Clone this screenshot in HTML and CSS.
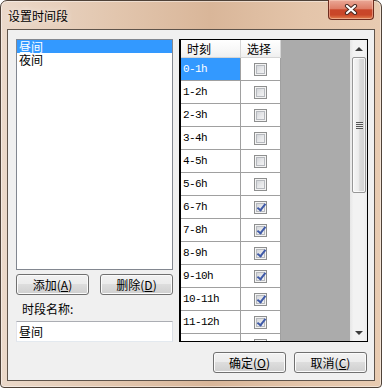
FILE: index.html
```html
<!DOCTYPE html>
<html lang="zh-CN">
<head>
    <meta charset="UTF-8">
    <title>设置时间段</title>
    <link rel="stylesheet" href="styles.css">
</head>
<body>

<div class="window">
    <div class="titlebar">
        <span class="title">设置时间段</span>
        <span class="close">
            <svg width="14" height="11" viewBox="0 0 14 11">
                <path d="M3 2 L11 9 M11 2 L3 9" stroke="#4a2a22" stroke-width="4.2" stroke-linecap="round"/>
                <path d="M3 2 L11 9 M11 2 L3 9" stroke="#fff" stroke-width="2.2" stroke-linecap="round"/>
            </svg>
        </span>
    </div>

    <div class="client">
        <div class="main">
            <div class="left">
                <div class="listbox">
                    <div class="item sel">昼间</div>
                    <div class="item">夜间</div>
                </div>
                <div class="btnrow">
                    <button class="btn">添加(<u>A</u>)</button>
                    <button class="btn">删除(<u>D</u>)</button>
                </div>
                <div class="label">时段名称:</div>
                <input class="field" type="text" value="昼间">
            </div>

            <div class="grid">
                <div class="sheet">
                    <div class="hrow"><div class="hc c1">时刻</div><div class="hc c2">选择</div></div>
                    <div class="row"><div class="c1 sel">0-1h</div><div class="c2"><span class="chk"></span></div></div>
                    <div class="row"><div class="c1">1-2h</div><div class="c2"><span class="chk"></span></div></div>
                    <div class="row"><div class="c1">2-3h</div><div class="c2"><span class="chk"></span></div></div>
                    <div class="row"><div class="c1">3-4h</div><div class="c2"><span class="chk"></span></div></div>
                    <div class="row"><div class="c1">4-5h</div><div class="c2"><span class="chk"></span></div></div>
                    <div class="row"><div class="c1">5-6h</div><div class="c2"><span class="chk"></span></div></div>
                    <div class="row"><div class="c1">6-7h</div><div class="c2"><span class="chk on"></span></div></div>
                    <div class="row"><div class="c1">7-8h</div><div class="c2"><span class="chk on"></span></div></div>
                    <div class="row"><div class="c1">8-9h</div><div class="c2"><span class="chk on"></span></div></div>
                    <div class="row"><div class="c1">9-10h</div><div class="c2"><span class="chk on"></span></div></div>
                    <div class="row"><div class="c1">10-11h</div><div class="c2"><span class="chk on"></span></div></div>
                    <div class="row"><div class="c1">11-12h</div><div class="c2"><span class="chk on"></span></div></div>
                    <!-- wiersz przycięty przez dolną krawędź -->
                    <div class="row"><div class="c1"></div><div class="c2"><span class="chk on"></span></div></div>
                </div>
                <div class="vscroll">
                    <div class="sb-btn up"></div>
                    <div class="sb-thumb"><span class="grip"></span></div>
                    <div class="sb-track"></div>
                    <div class="sb-btn down"></div>
                </div>
            </div>
        </div>

        <div class="footer">
            <button class="btn">确定(<u>O</u>)</button>
            <button class="btn">取消(<u>C</u>)</button>
        </div>
    </div>
</div>

</body>
</html>
```

FILE: styles.css
```css
body {
    margin: 0;
    background-color: #fff;
    font-family: "Noto Sans CJK SC", sans-serif;
    font-size: 12px;
    color: #000;
}

/* okno */
.window {
    box-sizing: border-box;
    width: 382px;
    height: 388px;
    padding: 0 6px 6px;
    border: 1px solid #4f4238;
    border-radius: 7px 7px 4px 4px;
    background: linear-gradient(to right, #ebd9ca 0%, #e2c6ae 30%, #d9b699 55%, #e4c5aa 80%, #e8cbb1 100%);
    box-shadow: inset 0 0 0 1px rgba(255, 255, 255, 0.45);
    display: flex;
    flex-direction: column;
}
.titlebar {
    height: 28px;
    flex-shrink: 0;
    display: flex;
    justify-content: space-between;
    align-items: flex-start;
    padding-left: 1px;
}
.title {
    padding-top: 8px;
    line-height: 14px;
    font-size: 12px;
    text-shadow: 0 0 6px rgba(255, 255, 255, 0.8);
}
.close {
    width: 46px;
    height: 20px;
    box-sizing: border-box;
    margin-top: -1px;
    margin-right: 1px;
    border: 1px solid #6e2c1e;
    border-top: none;
    border-radius: 0 0 4px 4px;
    background: linear-gradient(#eaa897 0%, #de7e67 45%, #c9462a 52%, #c94628 78%, #e2804f 100%);
    box-shadow: inset 0 0 0 1px rgba(255, 220, 200, 0.45);
    display: flex;
    align-items: center;
    justify-content: center;
}

/* obszar klienta */
.client {
    flex: 1;
    border: 1px solid #5f544b;
    background-color: #f0f0f0;
    padding: 9px 6px 7px 8px;
    display: flex;
    flex-direction: column;
}
.main {
    height: 303px;
    display: flex;
    gap: 6px;
}
.left {
    width: 157px;
    display: flex;
    flex-direction: column;
}
.listbox {
    height: 231px;
    box-sizing: border-box;
    border: 1px solid #828790;
    background-color: #fff;
}
.item {
    height: 13px;
    line-height: 13px;
    padding-left: 2px;
}
.item.sel {
    background-color: #3399ff;
    color: #fff;
}
.btnrow {
    display: flex;
    gap: 11px;
    margin-top: 4px;
}
.btn {
    width: 73px;
    height: 21px;
    box-sizing: border-box;
    padding: 0;
    border: 1px solid #707070;
    border-radius: 3px;
    background: linear-gradient(#f2f2f2 0%, #ebebeb 50%, #dddddd 50%, #cfcfcf 100%);
    box-shadow: inset 0 0 0 1px #fbfbfb;
    font-family: inherit;
    font-size: 12px;
    line-height: 19px;
    color: #000;
}
.btn u {
    text-underline-offset: 1px;
}
.label {
    margin-top: 8px;
    padding-left: 6px;
    line-height: 12px;
}
.field {
    margin: 6px 0 0;
    height: 21px;
    box-sizing: border-box;
    padding: 0 2px;
    border: 1px solid;
    border-color: #abadb3 #dbdfe6 #e3e9ef #e2e3ea;
    background-color: #fff;
    font-family: inherit;
    font-size: 12px;
    color: #000;
    outline: none;
}

/* tabela */
.grid {
    width: 189px;
    box-sizing: border-box;
    border: 1px solid #000;
    border-left-width: 2px;
    display: flex;
}
.sheet {
    flex: 1;
    overflow: hidden;
    background-color: #ababab;
}
.hrow, .row {
    display: flex;
}
.c1, .c2 {
    box-sizing: border-box;
    border-right: 1px solid #a0a0a0;
    border-bottom: 1px solid #a0a0a0;
    background-color: #fff;
    display: flex;
    align-items: center;
}
.c1 {
    width: 60px;
}
.c2 {
    width: 40px;
    justify-content: center;
}
.hc {
    height: 18px;
    padding-left: 6px;
    border-color: #d5d5d5;
    background: linear-gradient(#ffffff 0%, #f7f7f7 60%, #efefef 100%);
    justify-content: flex-start;
}
.row .c1, .row .c2 {
    height: 23px;
}
.row .c1 {
    padding-left: 2px;
    font-family: "Liberation Mono", monospace;
    font-size: 11px;
    letter-spacing: -0.6px;
}
.c1.sel {
    background-color: #3399ff;
    color: #fff;
}
.chk {
    position: relative;
    width: 13px;
    height: 13px;
    box-sizing: border-box;
    border: 1px solid #8e8f8f;
    background: linear-gradient(135deg, #c9ccd1 0%, #e6e7e9 50%, #f8f8f8 100%);
    box-shadow: inset 0 0 0 1px #f3f3f3, inset 0 0 0 2px #b6b9be;
}
.chk.on::after {
    content: "";
    position: absolute;
    left: 4px;
    top: 0px;
    width: 3px;
    height: 7px;
    border: solid #3f5aa8;
    border-width: 0 2px 2px 0;
    transform: rotate(38deg);
}

/* pasek przewijania */
.vscroll {
    width: 17px;
    background: linear-gradient(to right, #e6e6e6 0%, #f2f2f2 20%, #f2f2f2 80%, #ebebeb 100%);
    display: flex;
    flex-direction: column;
}
.sb-btn {
    height: 17px;
    display: flex;
    align-items: center;
    justify-content: center;
}
.sb-btn::before {
    content: "";
    border-left: 4px solid transparent;
    border-right: 4px solid transparent;
}
.sb-btn.up::before {
    border-bottom: 4px solid #3c3c3c;
}
.sb-btn.down::before {
    border-top: 4px solid #3c3c3c;
}
.sb-thumb {
    height: 136px;
    box-sizing: border-box;
    margin: 0 1px 0 2px;
    border: 1px solid #979797;
    border-radius: 2px;
    background: linear-gradient(to right, #f5f5f5 0%, #ececec 45%, #dcdcdc 55%, #d2d2d2 100%);
    box-shadow: inset 0 0 0 1px rgba(255, 255, 255, 0.7);
    display: flex;
    align-items: center;
    justify-content: center;
}
.grip {
    width: 7px;
    height: 7px;
    background: repeating-linear-gradient(#555 0px, #555 1px, #e8e8e8 1px, #e8e8e8 2px);
}
.sb-track {
    flex: 1;
}

/* przyciski na dole */
.footer {
    display: flex;
    justify-content: flex-end;
    gap: 8px;
    margin-top: 10px;
    padding-right: 1px;
}
```
